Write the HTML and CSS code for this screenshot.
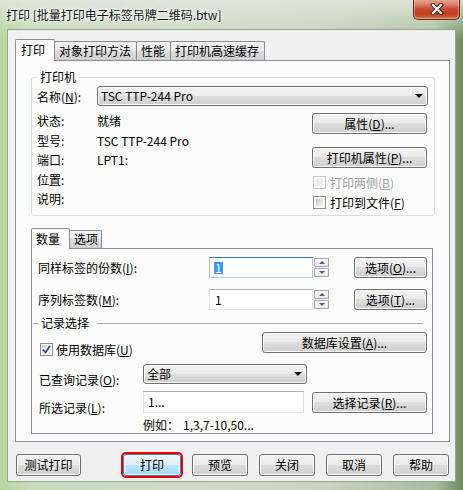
FILE: index.html
```html
<!DOCTYPE html>
<html lang="zh-CN">
<head>
<meta charset="utf-8">
<title>打印</title>
<link rel="stylesheet" href="styles.css">
</head>
<body>
<div class="window">
  <div class="titlebar">
    <span class="title">打印 [批量打印电子标签吊牌二维码.btw]</span>
    <div class="close">
      <svg width="14" height="12" viewBox="0 0 14 12">
        <path d="M3 2 L11 10 M11 2 L3 10" stroke="#43302b" stroke-width="4.4" stroke-linecap="square"/>
        <path d="M3 2 L11 10 M11 2 L3 10" stroke="#ffffff" stroke-width="2.2" stroke-linecap="square"/>
      </svg>
    </div>
  </div>
  <div class="client">
    <div class="tabs">
      <div class="tab active">打印</div>
      <div class="tab">对象打印方法</div>
      <div class="tab">性能</div>
      <div class="tab">打印机高速缓存</div>
    </div>
    <div class="panel">
      <fieldset class="group">
        <legend>打印机</legend>
        <div class="name-row">
          <span class="lbl">名称(<u>N</u>):</span>
          <div class="combo combo-printer"><span>TSC TTP-244 Pro</span><span class="arrow"></span></div>
        </div>
        <div class="info">
          <div class="info-list">
            <div class="irow"><span class="lbl">状态:</span><span>就绪</span></div>
            <div class="irow"><span class="lbl">型号:</span><span>TSC TTP-244 Pro</span></div>
            <div class="irow"><span class="lbl">端口:</span><span>LPT1:</span></div>
            <div class="irow"><span class="lbl">位置:</span><span></span></div>
            <div class="irow"><span class="lbl">说明:</span><span></span></div>
          </div>
          <div class="info-actions">
            <div class="btn">属性(<u>D</u>)...</div>
            <div class="btn btn-second">打印机属性(<u>P</u>)...</div>
            <div class="chk disabled chk-first"><span class="box"></span>打印两侧(<u>B</u>)</div>
            <div class="chk"><span class="box"></span>打印到文件(<u>F</u>)</div>
          </div>
        </div>
      </fieldset>

      <div class="subtabs">
        <div class="subtab active">数量</div>
        <div class="subtab">选项</div>
      </div>
      <div class="subpanel">
        <div class="qrow qrow-first">
          <span class="qlbl">同样标签的份数(<u>I</u>):</span>
          <div class="spin">
            <div class="edit focus"><span class="sel">1</span></div>
            <div class="spin-btns">
              <div class="sbtn"><span class="up"></span></div>
              <div class="sbtn"><span class="down"></span></div>
            </div>
          </div>
          <div class="btn btn-opt">选项(<u>O</u>)...</div>
        </div>
        <div class="qrow qrow-second">
          <span class="qlbl">序列标签数(<u>M</u>):</span>
          <div class="spin">
            <div class="edit"><span>1</span></div>
            <div class="spin-btns">
              <div class="sbtn"><span class="up"></span></div>
              <div class="sbtn"><span class="down"></span></div>
            </div>
          </div>
          <div class="btn btn-opt">选项(<u>T</u>)...</div>
        </div>
        <div class="rec-header">
          <span class="rline-left"></span>
          <span class="rec-title">记录选择</span>
          <span class="rline"></span>
        </div>
        <div class="db-row">
          <div class="chk chk-db"><span class="box checked">
            <svg width="9" height="9" viewBox="0 0 9 9"><path d="M1 4.5 L3.5 7.5 L8 1" fill="none" stroke="#3c4f86" stroke-width="1.8"/></svg>
          </span>使用数据库(<u>U</u>)</div>
          <div class="btn btn-db">数据库设置(<u>A</u>)...</div>
        </div>
        <div class="rrow rrow-a">
          <span class="rlbl">已查询记录(<u>O</u>):</span>
          <div class="combo combo-all"><span>全部</span><span class="arrow"></span></div>
        </div>
        <div class="rrow rrow-b">
          <span class="rlbl rlbl-b">所选记录(<u>L</u>):</span>
          <div class="edit edit-records"><span>1...</span></div>
          <div class="btn btn-rec">选择记录(<u>R</u>)...</div>
        </div>
        <div class="example">
          <span class="ex-lbl">例如：</span><span>1,3,7-10,50...</span>
        </div>
      </div>
    </div>
    <div class="buttons">
      <div class="btn bb bb-test">测试打印</div>
      <div class="btn bb bb-print default">打印</div>
      <div class="btn bb">预览</div>
      <div class="btn bb">关闭</div>
      <div class="btn bb">取消</div>
      <div class="btn bb">帮助</div>
    </div>
  </div>
</div>
</body>
</html>
```

FILE: styles.css
```css
* { box-sizing: border-box; }

html, body { margin: 0; padding: 0; }

body {
  font-family: "Noto Sans CJK SC", "Noto Sans", sans-serif;
  font-size: 12px;
  color: #000;
  background: #ffffff;
}

u { text-decoration: underline; text-underline-offset: 1px; }

.window {
  width: 463px;
  height: 490px;
  display: flex;
  flex-direction: column;
  overflow: hidden;
  background:
    linear-gradient(180deg, rgba(226, 233, 224, 0.85) 0, rgba(214, 226, 208, 0.4) 24px, rgba(200, 218, 190, 0) 40px),
    linear-gradient(90deg, #b5d69c 0, #c6dbb8 6%, #cfdcc9 40%, #c7d4c0 70%, #aabd9c 94%, #6d8a5e 100%);
}

.titlebar {
  height: 29px;
  flex: none;
  display: flex;
  align-items: flex-start;
}

.title {
  margin: 8px 0 0 6px;
  line-height: 14px;
  white-space: nowrap;
  color: #111;
  text-shadow: 0 0 6px #fff, 0 0 3px #fff, 0 0 2px #fff;
}

.close {
  margin: -1px 3px 0 auto;
  width: 47px;
  height: 21px;
  border: 1px solid #5e2c22;
  border-top: none;
  border-radius: 0 0 5px 5px;
  background: linear-gradient(180deg, #e9ab9c 0, #d77a66 30%, #c94a2e 50%, #c03d20 75%, #d8714c 100%);
  box-shadow: inset 0 0 0 1px rgba(255, 220, 210, 0.45);
  display: flex;
  align-items: center;
  justify-content: center;
}

.client {
  flex: none;
  margin: 0 7px;
  height: 453px;
  border: 1px solid #93a68f;
  background: #f0f0f0;
  display: flex;
  flex-direction: column;
}

/* main tabs */
.tabs {
  display: flex;
  align-items: flex-end;
  height: 22px;
  margin: 9px 0 0 7px;
}

.tab {
  height: 19px;
  margin-bottom: 1px;
  margin-left: -1px;
  padding: 0 5px 0 4px;
  border: 1px solid #898c95;
  border-bottom: none;
  border-radius: 2px 2px 0 0;
  background: linear-gradient(180deg, #f2f2f2 0, #ebebeb 50%, #dddddd 50%, #cfcfcf 100%);
  line-height: 17px;
  white-space: nowrap;
}

.tab.active {
  height: 22px;
  margin: 0;
  padding: 0 9px 0 5px;
  background: #fcfcfc;
  line-height: 20px;
  position: relative;
  z-index: 1;
}

.panel {
  flex: none;
  margin: -1px 5px 0 7px;
  height: 382px;
  border: 1px solid #898c95;
  background: #fcfcfc;
  padding: 0 14px 0 15px;
}

/* printer group */
.group {
  margin: 9px 0 0 0;
  padding: 0 6px 3px 5px;
  border: 1px solid #d5dfe5;
  border-radius: 3px;
  min-width: 0;
}

.group legend {
  padding: 0 3px;
  line-height: 14px;
}

.name-row {
  margin-top: 2px;
  height: 20px;
  display: flex;
  align-items: center;
}

.lbl {
  flex: none;
  width: 60px;
  white-space: nowrap;
}

.combo {
  height: 20px;
  border: 1px solid #707070;
  border-radius: 3px;
  background: linear-gradient(180deg, #f2f2f2 0, #ebebeb 50%, #dddddd 50%, #cfcfcf 100%);
  box-shadow: inset 0 0 0 1px #fafafa;
  display: flex;
  align-items: center;
  padding-left: 3px;
  line-height: 18px;
  white-space: nowrap;
  flex: none;
}

.combo-printer { width: 331px; }

.arrow {
  margin-left: auto;
  margin-right: 4px;
  width: 0;
  height: 0;
  border-left: 4px solid transparent;
  border-right: 4px solid transparent;
  border-top: 4px solid #000;
}

.info {
  display: flex;
  margin-top: 5px;
}

.info-list {
  flex: 1;
  line-height: 19.5px;
}

.irow {
  display: flex;
  height: 19.5px;
}

.info-actions {
  flex: none;
  width: 115px;
  margin: 2px 1px 0 0;
  display: flex;
  flex-direction: column;
}

.btn {
  height: 21px;
  border: 1px solid #707070;
  border-radius: 3px;
  background: linear-gradient(180deg, #f2f2f2 0, #ebebeb 50%, #dddddd 50%, #cfcfcf 100%);
  box-shadow: inset 0 0 0 1px #fbfbfb;
  text-align: center;
  line-height: 19px;
  white-space: nowrap;
  flex: none;
}

.btn-second { margin-top: 13px; }

.chk {
  display: flex;
  align-items: center;
  height: 20px;
  white-space: nowrap;
}

.chk-first { margin-top: 4px; }

.chk .box {
  flex: none;
  width: 13px;
  height: 13px;
  margin: 0 4px 0 1px;
  border: 1px solid #8e8f8f;
  padding: 2px;
  background: linear-gradient(135deg, #b9bcc1 0, #e4e5e7 60%, #f4f4f4 100%) content-box, #fdfdfd;
  display: flex;
  align-items: center;
  justify-content: center;
}

.chk.disabled { color: #a0a0a0; }

.chk.disabled .box {
  border-color: #c6c6c6;
  background: linear-gradient(135deg, #e6e6e6 0, #f2f2f2 100%) content-box, #fdfdfd;
}

.chk .box.checked {
  padding: 1px;
  background: linear-gradient(135deg, #cfd2d6 0, #eeeff0 60%, #fafafa 100%) content-box, #fdfdfd;
}

/* quantity tabs */
.subtabs {
  display: flex;
  align-items: flex-end;
  height: 21px;
  margin-top: 12px;
}

.subtab {
  height: 18px;
  margin-bottom: 1px;
  margin-left: -1px;
  padding: 0 3px 0 4px;
  border: 1px solid #898c95;
  border-bottom: none;
  border-radius: 2px 2px 0 0;
  background: linear-gradient(180deg, #f2f2f2 0, #ebebeb 50%, #dddddd 50%, #cfcfcf 100%);
  line-height: 16px;
  white-space: nowrap;
}

.subtab.active {
  height: 21px;
  margin: 0;
  padding: 0 9px 0 4px;
  background: #fcfcfc;
  line-height: 19px;
  position: relative;
  z-index: 1;
}

.subpanel {
  margin: -1px 2px 0 0;
  height: 186px;
  border: 1px solid #898c95;
  background: #fcfcfc;
}

.qrow {
  display: flex;
  align-items: center;
  height: 21px;
  padding-left: 6px;
}

.qrow-first { margin-top: 8px; }
.qrow-second { margin-top: 11px; }

.qlbl {
  flex: none;
  width: 171px;
  white-space: nowrap;
}

.spin {
  display: flex;
  align-items: center;
  height: 21px;
  flex: none;
}

.edit {
  height: 21px;
  border: 1px solid;
  border-color: #abadb3 #dbdfe6 #e3e9ef #e2e3ea;
  background: #fff;
  padding-left: 5px;
  display: flex;
  align-items: center;
  line-height: 14px;
  flex: none;
}

.spin .edit { width: 104px; }

.edit.focus {
  border-color: #3d7bad #a4c9e3 #b5cfe7 #a4c9e3;
}

.sel {
  background: #3399ff;
  color: #fff;
  padding: 0 1px;
  line-height: 12px;
  margin-left: -1px;
}

.spin-btns {
  display: flex;
  flex-direction: column;
  justify-content: center;
  gap: 1px;
  margin-left: 1px;
}

.sbtn {
  width: 15px;
  height: 9px;
  border: 1px solid #a9a9a9;
  background: linear-gradient(180deg, #fbfbfb 0, #e9e9e9 100%);
  display: flex;
  align-items: center;
  justify-content: center;
}

.up {
  width: 0;
  height: 0;
  border-left: 3px solid transparent;
  border-right: 3px solid transparent;
  border-bottom: 3px solid #4c5d8c;
}

.down {
  width: 0;
  height: 0;
  border-left: 3px solid transparent;
  border-right: 3px solid transparent;
  border-top: 3px solid #4c5d8c;
}

.btn-opt {
  width: 73px;
  margin: 0 5px 0 auto;
}

.rec-header {
  display: flex;
  align-items: center;
  height: 14px;
  margin-top: 6px;
  padding-left: 1px;
}

.rline-left {
  width: 5px;
  height: 1px;
  background: #a8a8a8;
}

.rec-title {
  margin: 0 8px 0 3px;
  line-height: 14px;
}

.rline {
  flex: 1;
  height: 1px;
  background: #a8a8a8;
  margin-right: 9px;
}

.db-row {
  display: flex;
  align-items: flex-start;
  height: 21px;
  margin-top: 2px;
  padding-left: 7px;
}

.chk-db {
  margin-top: 7px;
}

.chk-db .box { margin-right: 3px; }

.btn-db {
  width: 165px;
  margin: 0 5px 0 auto;
}

.rrow {
  display: flex;
  align-items: flex-start;
  padding-left: 7px;
}

.rrow-a { height: 20px; margin-top: 11px; }
.rrow-b { height: 22px; margin-top: 7px; }

.rlbl {
  flex: none;
  width: 104px;
  margin-top: 9px;
  line-height: 14px;
  white-space: nowrap;
}

.rlbl-b { margin-top: 10px; }

.combo-all { width: 164px; }

.edit-records {
  width: 161px;
  height: 22px;
  padding-left: 4px;
}

.btn-rec {
  width: 115px;
  margin: 1px 0 0 8px;
}

.example {
  margin-top: 5px;
  padding-left: 111px;
  line-height: 14px;
  display: flex;
}

.ex-lbl {
  width: 40px;
  flex: none;
}

/* bottom buttons */
.buttons {
  display: flex;
  height: 22px;
  margin-top: 12px;
  padding: 0 6px 0 8px;
  gap: 11px;
}

.bb {
  height: 22px;
  width: 56px;
  line-height: 20px;
}

.bb-test {
  width: 65px;
  margin-right: auto;
}

.bb-print { width: 58px; }

.btn.default {
  border-color: #3c7fb1;
  background: linear-gradient(180deg, #eaf6fd 0, #d9f0fc 50%, #bee6fd 50%, #a7d9f5 100%);
  box-shadow: inset 0 0 0 1px #f4fbff;
  outline: 2px solid #f00000;
  outline-offset: 0;
}
```
